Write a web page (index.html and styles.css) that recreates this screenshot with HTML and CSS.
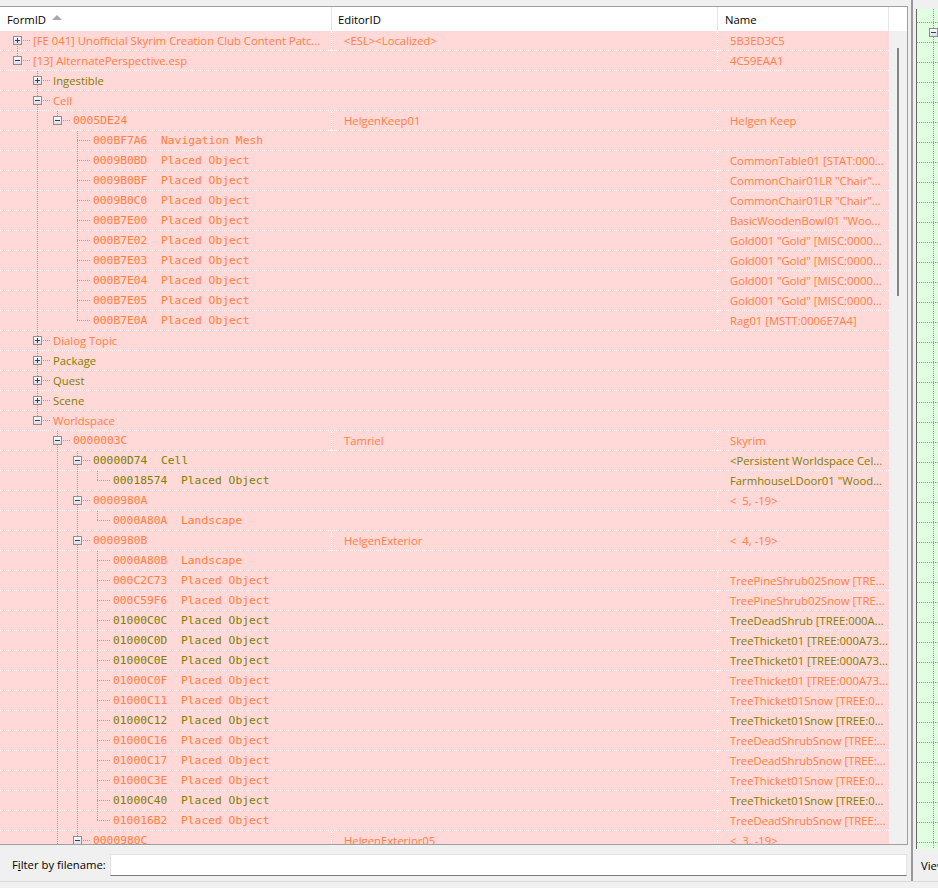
FILE: index.html
```html
<!DOCTYPE html>
<html lang="en">
<head>
    <meta charset="UTF-8">
    <title>Records</title>
    <link rel="stylesheet" href="styles.css">
</head>
<body>
<div class="app">
    <div class="work">
        <div class="leftcol">
            <div class="tree">
                <div class="head">
                    <div class="hc h1">FormID<svg class="sort" width="10" height="5" viewBox="0 0 10 5"><polygon points="0,5 5,0 10,5" fill="#a8a8a8"/></svg></div>
                    <div class="hc h2">EditorID</div>
                    <div class="hc h3">Name</div>
                    <div class="hfill"></div>
                </div>
                <div class="body">
                    <div class="rows">
                        <!-- plugins -->
                        <div class="row o"><div class="cell c1 sep"><span class="n first"><i class="box plus"></i></span><span class="tx">[FE 041] Unofficial Skyrim Creation Club Content Patc...</span></div><div class="cell c2 sep"><span class="tx">&lt;ESL&gt;&lt;Localized&gt;</span></div><div class="cell c3"><span class="tx">5B3ED3C5</span></div></div>
                        <div class="row o"><div class="cell c1"><span class="n last"><i class="box minus"></i></span><span class="tx">[13] AlternatePerspective.esp</span></div><div class="cell c2 sep"></div><div class="cell c3"><span class="tx">4C59EAA1</span></div></div>
                        <div class="row ol"><div class="cell c1"><span class="g"></span><span class="n mid"><i class="box plus"></i></span><span class="tx">Ingestible</span></div><div class="cell c2"></div><div class="cell c3"></div></div>
                        <div class="row o"><div class="cell c1"><span class="g"></span><span class="n mid"><i class="box minus"></i></span><span class="tx">Cell</span></div><div class="cell c2"></div><div class="cell c3"></div></div>
                        <div class="row o"><div class="cell c1 sep"><span class="g"></span><span class="g v"></span><span class="n last"><i class="box minus"></i></span><span class="tx mono">0005DE24</span></div><div class="cell c2 sep"><span class="tx">HelgenKeep01</span></div><div class="cell c3"><span class="tx">Helgen Keep</span></div></div>
                        <div class="row o"><div class="cell c1"><span class="g"></span><span class="g v"></span><span class="g"></span><span class="n mid"></span><span class="tx mono">000BF7A6  Navigation Mesh</span></div><div class="cell c2"></div><div class="cell c3"></div></div>
                        <div class="row o"><div class="cell c1"><span class="g"></span><span class="g v"></span><span class="g"></span><span class="n mid"></span><span class="tx mono">0009B0BD  Placed Object</span></div><div class="cell c2 sep"></div><div class="cell c3"><span class="tx">CommonTable01 [STAT:000...</span></div></div>
                        <div class="row o"><div class="cell c1"><span class="g"></span><span class="g v"></span><span class="g"></span><span class="n mid"></span><span class="tx mono">0009B0BF  Placed Object</span></div><div class="cell c2 sep"></div><div class="cell c3"><span class="tx">CommonChair01LR "Chair"...</span></div></div>
                        <div class="row o"><div class="cell c1"><span class="g"></span><span class="g v"></span><span class="g"></span><span class="n mid"></span><span class="tx mono">0009B0C0  Placed Object</span></div><div class="cell c2 sep"></div><div class="cell c3"><span class="tx">CommonChair01LR "Chair"...</span></div></div>
                        <div class="row o"><div class="cell c1"><span class="g"></span><span class="g v"></span><span class="g"></span><span class="n mid"></span><span class="tx mono">000B7E00  Placed Object</span></div><div class="cell c2 sep"></div><div class="cell c3"><span class="tx">BasicWoodenBowl01 "Woo...</span></div></div>
                        <div class="row o"><div class="cell c1"><span class="g"></span><span class="g v"></span><span class="g"></span><span class="n mid"></span><span class="tx mono">000B7E02  Placed Object</span></div><div class="cell c2 sep"></div><div class="cell c3"><span class="tx">Gold001 "Gold" [MISC:0000...</span></div></div>
                        <div class="row o"><div class="cell c1"><span class="g"></span><span class="g v"></span><span class="g"></span><span class="n mid"></span><span class="tx mono">000B7E03  Placed Object</span></div><div class="cell c2 sep"></div><div class="cell c3"><span class="tx">Gold001 "Gold" [MISC:0000...</span></div></div>
                        <div class="row o"><div class="cell c1"><span class="g"></span><span class="g v"></span><span class="g"></span><span class="n mid"></span><span class="tx mono">000B7E04  Placed Object</span></div><div class="cell c2 sep"></div><div class="cell c3"><span class="tx">Gold001 "Gold" [MISC:0000...</span></div></div>
                        <div class="row o"><div class="cell c1"><span class="g"></span><span class="g v"></span><span class="g"></span><span class="n mid"></span><span class="tx mono">000B7E05  Placed Object</span></div><div class="cell c2 sep"></div><div class="cell c3"><span class="tx">Gold001 "Gold" [MISC:0000...</span></div></div>
                        <div class="row o"><div class="cell c1"><span class="g"></span><span class="g v"></span><span class="g"></span><span class="n last"></span><span class="tx mono">000B7E0A  Placed Object</span></div><div class="cell c2 sep"></div><div class="cell c3"><span class="tx">Rag01 [MSTT:0006E7A4]</span></div></div>
                        <!-- groups -->
                        <div class="row o"><div class="cell c1"><span class="g"></span><span class="n mid"><i class="box plus"></i></span><span class="tx">Dialog Topic</span></div><div class="cell c2"></div><div class="cell c3"></div></div>
                        <div class="row ol"><div class="cell c1"><span class="g"></span><span class="n mid"><i class="box plus"></i></span><span class="tx">Package</span></div><div class="cell c2"></div><div class="cell c3"></div></div>
                        <div class="row ol"><div class="cell c1"><span class="g"></span><span class="n mid"><i class="box plus"></i></span><span class="tx">Quest</span></div><div class="cell c2"></div><div class="cell c3"></div></div>
                        <div class="row ol"><div class="cell c1"><span class="g"></span><span class="n mid"><i class="box plus"></i></span><span class="tx">Scene</span></div><div class="cell c2"></div><div class="cell c3"></div></div>
                        <div class="row o"><div class="cell c1"><span class="g"></span><span class="n last"><i class="box minus"></i></span><span class="tx">Worldspace</span></div><div class="cell c2"></div><div class="cell c3"></div></div>
                        <!-- worldspace -->
                        <div class="row o"><div class="cell c1 sep"><span class="g"></span><span class="g"></span><span class="n mid"><i class="box minus"></i></span><span class="tx mono">0000003C</span></div><div class="cell c2 sep"><span class="tx">Tamriel</span></div><div class="cell c3"><span class="tx">Skyrim</span></div></div>
                        <div class="row ol"><div class="cell c1"><span class="g"></span><span class="g"></span><span class="g v"></span><span class="n mid"><i class="box minus"></i></span><span class="tx mono">00000D74  Cell</span></div><div class="cell c2"></div><div class="cell c3"><span class="tx">&lt;Persistent Worldspace Cel...</span></div></div>
                        <div class="row ol"><div class="cell c1"><span class="g"></span><span class="g"></span><span class="g v"></span><span class="g v"></span><span class="n last"></span><span class="tx mono">00018574  Placed Object</span></div><div class="cell c2"></div><div class="cell c3"><span class="tx">FarmhouseLDoor01 "Wood...</span></div></div>
                        <div class="row o"><div class="cell c1"><span class="g"></span><span class="g"></span><span class="g v"></span><span class="n mid"><i class="box minus"></i></span><span class="tx mono">0000980A</span></div><div class="cell c2 sep"></div><div class="cell c3"><span class="tx">&lt;  5, -19&gt;</span></div></div>
                        <div class="row o"><div class="cell c1"><span class="g"></span><span class="g"></span><span class="g v"></span><span class="g v"></span><span class="n last"></span><span class="tx mono">0000A80A  Landscape</span></div><div class="cell c2"></div><div class="cell c3"></div></div>
                        <div class="row o"><div class="cell c1 sep"><span class="g"></span><span class="g"></span><span class="g v"></span><span class="n mid"><i class="box minus"></i></span><span class="tx mono">0000980B</span></div><div class="cell c2 sep"><span class="tx">HelgenExterior</span></div><div class="cell c3"><span class="tx">&lt;  4, -19&gt;</span></div></div>
                        <div class="row o"><div class="cell c1"><span class="g"></span><span class="g"></span><span class="g v"></span><span class="g v"></span><span class="n mid"></span><span class="tx mono">0000A80B  Landscape</span></div><div class="cell c2"></div><div class="cell c3"></div></div>
                        <div class="row o"><div class="cell c1"><span class="g"></span><span class="g"></span><span class="g v"></span><span class="g v"></span><span class="n mid"></span><span class="tx mono">000C2C73  Placed Object</span></div><div class="cell c2 sep"></div><div class="cell c3"><span class="tx">TreePineShrub02Snow [TRE...</span></div></div>
                        <div class="row o"><div class="cell c1"><span class="g"></span><span class="g"></span><span class="g v"></span><span class="g v"></span><span class="n mid"></span><span class="tx mono">000C59F6  Placed Object</span></div><div class="cell c2 sep"></div><div class="cell c3"><span class="tx">TreePineShrub02Snow [TRE...</span></div></div>
                        <div class="row ol"><div class="cell c1"><span class="g"></span><span class="g"></span><span class="g v"></span><span class="g v"></span><span class="n mid"></span><span class="tx mono">01000C0C  Placed Object</span></div><div class="cell c2 sep"></div><div class="cell c3"><span class="tx">TreeDeadShrub [TREE:000A...</span></div></div>
                        <div class="row ol"><div class="cell c1"><span class="g"></span><span class="g"></span><span class="g v"></span><span class="g v"></span><span class="n mid"></span><span class="tx mono">01000C0D  Placed Object</span></div><div class="cell c2 sep"></div><div class="cell c3"><span class="tx">TreeThicket01 [TREE:000A73...</span></div></div>
                        <div class="row ol"><div class="cell c1"><span class="g"></span><span class="g"></span><span class="g v"></span><span class="g v"></span><span class="n mid"></span><span class="tx mono">01000C0E  Placed Object</span></div><div class="cell c2 sep"></div><div class="cell c3"><span class="tx">TreeThicket01 [TREE:000A73...</span></div></div>
                        <div class="row o"><div class="cell c1"><span class="g"></span><span class="g"></span><span class="g v"></span><span class="g v"></span><span class="n mid"></span><span class="tx mono">01000C0F  Placed Object</span></div><div class="cell c2 sep"></div><div class="cell c3"><span class="tx">TreeThicket01 [TREE:000A73...</span></div></div>
                        <div class="row o"><div class="cell c1"><span class="g"></span><span class="g"></span><span class="g v"></span><span class="g v"></span><span class="n mid"></span><span class="tx mono">01000C11  Placed Object</span></div><div class="cell c2 sep"></div><div class="cell c3"><span class="tx">TreeThicket01Snow [TREE:0...</span></div></div>
                        <div class="row ol"><div class="cell c1"><span class="g"></span><span class="g"></span><span class="g v"></span><span class="g v"></span><span class="n mid"></span><span class="tx mono">01000C12  Placed Object</span></div><div class="cell c2 sep"></div><div class="cell c3"><span class="tx">TreeThicket01Snow [TREE:0...</span></div></div>
                        <div class="row o"><div class="cell c1"><span class="g"></span><span class="g"></span><span class="g v"></span><span class="g v"></span><span class="n mid"></span><span class="tx mono">01000C16  Placed Object</span></div><div class="cell c2 sep"></div><div class="cell c3"><span class="tx">TreeDeadShrubSnow [TREE:...</span></div></div>
                        <div class="row o"><div class="cell c1"><span class="g"></span><span class="g"></span><span class="g v"></span><span class="g v"></span><span class="n mid"></span><span class="tx mono">01000C17  Placed Object</span></div><div class="cell c2 sep"></div><div class="cell c3"><span class="tx">TreeDeadShrubSnow [TREE:...</span></div></div>
                        <div class="row o"><div class="cell c1"><span class="g"></span><span class="g"></span><span class="g v"></span><span class="g v"></span><span class="n mid"></span><span class="tx mono">01000C3E  Placed Object</span></div><div class="cell c2 sep"></div><div class="cell c3"><span class="tx">TreeThicket01Snow [TREE:0...</span></div></div>
                        <div class="row ol"><div class="cell c1"><span class="g"></span><span class="g"></span><span class="g v"></span><span class="g v"></span><span class="n mid"></span><span class="tx mono">01000C40  Placed Object</span></div><div class="cell c2 sep"></div><div class="cell c3"><span class="tx">TreeThicket01Snow [TREE:0...</span></div></div>
                        <div class="row o"><div class="cell c1"><span class="g"></span><span class="g"></span><span class="g v"></span><span class="g v"></span><span class="n last"></span><span class="tx mono">010016B2  Placed Object</span></div><div class="cell c2 sep"></div><div class="cell c3"><span class="tx">TreeDeadShrubSnow [TREE:...</span></div></div>
                        <div class="row o"><div class="cell c1 sep"><span class="g"></span><span class="g"></span><span class="g v"></span><span class="n mid"><i class="box minus"></i></span><span class="tx mono">0000980C</span></div><div class="cell c2 sep"><span class="tx">HelgenExterior05</span></div><div class="cell c3"><span class="tx">&lt;  3, -19&gt;</span></div></div>
                    </div>
                    <div class="vscroll"><div class="thumb"></div></div>
                </div>
            </div>
            <div class="filter">
                <label class="flabel">F<u>i</u>lter by filename:</label>
                <input type="text" class="finput">
            </div>
        </div>
        <div class="rightcol">
            <div class="side">
                <div class="green">
                    <div class="grow top"><span class="gn line"></span></div>
                    <div class="grow"><span class="gn first"><i class="box minus"></i></span></div>
                    <div class="grow"><span class="gn line"></span></div>
                    <div class="grow"><span class="gn line"></span></div>
                    <div class="grow"><span class="gn line"></span></div>
                    <div class="grow"><span class="gn line"></span></div>
                    <div class="grow"><span class="gn line"></span></div>
                    <div class="grow"><span class="gn line"></span></div>
                    <div class="grow"><span class="gn line"></span></div>
                    <div class="grow"><span class="gn line"></span></div>
                    <div class="grow"><span class="gn line"></span></div>
                    <div class="grow"><span class="gn line"></span></div>
                    <div class="grow"><span class="gn line"></span></div>
                    <div class="grow"><span class="gn line"></span></div>
                    <div class="grow"><span class="gn line"></span></div>
                    <div class="grow"><span class="gn line"></span></div>
                    <div class="grow"><span class="gn line"></span></div>
                    <div class="grow"><span class="gn line"></span></div>
                    <div class="grow"><span class="gn line"></span></div>
                    <div class="grow"><span class="gn line"></span></div>
                    <div class="grow"><span class="gn line"></span></div>
                    <div class="grow"><span class="gn line"></span></div>
                    <div class="grow"><span class="gn line"></span></div>
                    <div class="grow"><span class="gn line"></span></div>
                    <div class="grow"><span class="gn line"></span></div>
                    <div class="grow"><span class="gn line"></span></div>
                    <div class="grow"><span class="gn line"></span></div>
                    <div class="grow"><span class="gn line"></span></div>
                    <div class="grow"><span class="gn line"></span></div>
                    <div class="grow"><span class="gn line"></span></div>
                    <div class="grow"><span class="gn line"></span></div>
                    <div class="grow"><span class="gn line"></span></div>
                    <div class="grow"><span class="gn line"></span></div>
                    <div class="grow"><span class="gn line"></span></div>
                    <div class="grow"><span class="gn line"></span></div>
                    <div class="grow"><span class="gn line"></span></div>
                    <div class="grow"><span class="gn line"></span></div>
                    <div class="grow"><span class="gn line"></span></div>
                    <div class="grow"><span class="gn line"></span></div>
                    <div class="grow"><span class="gn line"></span></div>
                    <div class="grow"><span class="gn line"></span></div>
                    <div class="grow"><span class="gn line"></span></div>
                    <div class="grow"><span class="gn line"></span></div>
                </div>
            </div>
            <div class="viewbar"><span class="viewbtn">View</span></div>
        </div>
    </div>
    <div class="status"></div>
</div>
</body>
</html>
```

FILE: styles.css
```css
* {
    box-sizing: border-box;
}

body {
    margin: 0;
    background: #f0f0f0;
    font-family: "Open Sans", "Noto Sans", sans-serif;
    font-size: 11.3px;
    color: #000;
}

.app {
    height: 888px;
    overflow: hidden;
    display: flex;
    flex-direction: column;
}

.work {
    display: flex;
    height: 881px;
}

/* left side: record tree + filter */
.leftcol {
    width: 908px;
    flex: none;
    padding-top: 6px;
    display: flex;
    flex-direction: column;
}

.tree {
    height: 839px;
    border-top: 1px solid #a0a0a0;
    border-right: 1px solid #a0a0a0;
    border-bottom: 1px solid #a0a0a0;
    display: flex;
    flex-direction: column;
    overflow: hidden;
}

.head {
    display: flex;
    height: 24px;
    background: #fff;
    flex: none;
}

.hc {
    display: flex;
    align-items: center;
    padding-top: 1px;
    border-right: 1px solid #e5e5e5;
    white-space: nowrap;
}

.h1 { width: 332px; padding-left: 7px; }
.h2 { width: 386px; padding-left: 6px; }
.h3 { width: 171px; padding-left: 7px; }

.hfill {
    width: 18px;
}

.sort {
    margin-left: 6px;
    margin-top: -4px;
}

.body {
    display: flex;
    flex: 1;
    overflow: hidden;
}

.rows {
    width: 889px;
    flex: none;
}

.vscroll {
    width: 18px;
    background: #f0f0f0;
    padding-top: 17px;
}

.thumb {
    width: 2px;
    height: 248px;
    margin-left: 8px;
    background: #858585;
}

.row {
    display: flex;
    height: 20px;
    background-color: #ffd8d8;
    background-image: repeating-linear-gradient(90deg, #fff 0 1px, transparent 1px 2px);
    background-size: 100% 1px;
    background-position: 0 19px;
    background-repeat: no-repeat;
}

.row.o { color: #ff8040; }
.row.ol { color: #808000; }

.cell {
    display: flex;
    align-items: flex-start;
    height: 20px;
    line-height: 19px;
    overflow: hidden;
    border-right: 1px solid transparent;
}

.c1 { width: 332px; padding-left: 7px; }
.c2 { width: 386px; padding-left: 12px; }
.c3 { width: 171px; padding-left: 12px; border-right: none; }

.sep {
    border-right: 1px dotted #fff;
}

.tx {
    white-space: pre;
}

.mono {
    font-family: "DejaVu Sans Mono", monospace;
    font-size: 11.3px;
}

/* tree guides */
.g {
    width: 20px;
    height: 20px;
    flex: none;
}

.g.v {
    background: repeating-linear-gradient(#a0a0a0 0 1px, transparent 1px 2px) 10px 0 / 1px 20px no-repeat;
}

.n {
    width: 26px;
    height: 20px;
    flex: none;
    display: flex;
    align-items: flex-start;
    padding: 5px 0 0 6px;
    background:
        repeating-linear-gradient(90deg, #a0a0a0 0 1px, transparent 1px 2px) 10px 9px / 13px 1px no-repeat;
}

.n.mid {
    background:
        repeating-linear-gradient(90deg, #a0a0a0 0 1px, transparent 1px 2px) 10px 9px / 13px 1px no-repeat,
        repeating-linear-gradient(#a0a0a0 0 1px, transparent 1px 2px) 10px 0 / 1px 20px no-repeat;
}

.n.last {
    background:
        repeating-linear-gradient(90deg, #a0a0a0 0 1px, transparent 1px 2px) 10px 9px / 13px 1px no-repeat,
        repeating-linear-gradient(#a0a0a0 0 1px, transparent 1px 2px) 10px 0 / 1px 10px no-repeat;
}

.n.first {
    background:
        repeating-linear-gradient(90deg, #a0a0a0 0 1px, transparent 1px 2px) 10px 9px / 13px 1px no-repeat,
        repeating-linear-gradient(#a0a0a0 0 1px, transparent 1px 2px) 10px 9px / 1px 11px no-repeat;
}

.box {
    display: block;
    width: 9px;
    height: 9px;
    border: 1px solid #8e8f94;
}

.box.minus {
    background:
        linear-gradient(#1f3f86, #1f3f86) center / 5px 1px no-repeat,
        linear-gradient(#fdfdfd, #dedede);
}

.box.plus {
    background:
        linear-gradient(#1f3f86, #1f3f86) center / 5px 1px no-repeat,
        linear-gradient(#1f3f86, #1f3f86) center / 1px 5px no-repeat,
        linear-gradient(#fdfdfd, #dedede);
}

/* filter bar */
.filter {
    display: flex;
    align-items: flex-start;
    height: 36px;
    padding: 9px 0 0 12px;
}

.flabel {
    width: 98px;
    line-height: 21px;
    white-space: nowrap;
}

.finput {
    width: 797px;
    height: 22px;
    margin: 0;
    border: 1px solid #e3e3e3;
    border-bottom-color: #7a7a7a;
    background: #fff;
    outline: none;
}

/* right pane */
.rightcol {
    flex: 1;
    display: flex;
    flex-direction: column;
    padding-left: 3px;
}

.side {
    flex: 1;
    border-left: 2px solid #999;
    padding-left: 3px;
    overflow: hidden;
}

.green {
    margin-top: 9px;
    height: 840px;
    background: #e0ffe0;
    border-left: 1px solid #666;
    overflow: hidden;
}

.grow {
    height: 20px;
    background-image: repeating-linear-gradient(90deg, #999 0 1px, transparent 1px 2px);
    background-size: 100% 1px;
    background-position: 0 19px;
    background-repeat: no-repeat;
}

.grow.top {
    height: 14px;
    background-position: 0 13px;
}

.gn {
    display: block;
    width: 26px;
    height: 20px;
    padding: 5px 0 0 12px;
}

.grow.top .gn {
    height: 14px;
}

.gn.first,
.gn.line {
    background: repeating-linear-gradient(#999 0 1px, transparent 1px 2px) 16px 0 / 1px 20px no-repeat;
}

.viewbar {
    height: 32px;
    border-left: 2px solid #999;
    padding: 9px 0 0 8px;
    overflow: hidden;
}

.viewbtn {
    white-space: nowrap;
}

.status {
    height: 7px;
    border-top: 1px solid #dadada;
    flex: none;
}
```
